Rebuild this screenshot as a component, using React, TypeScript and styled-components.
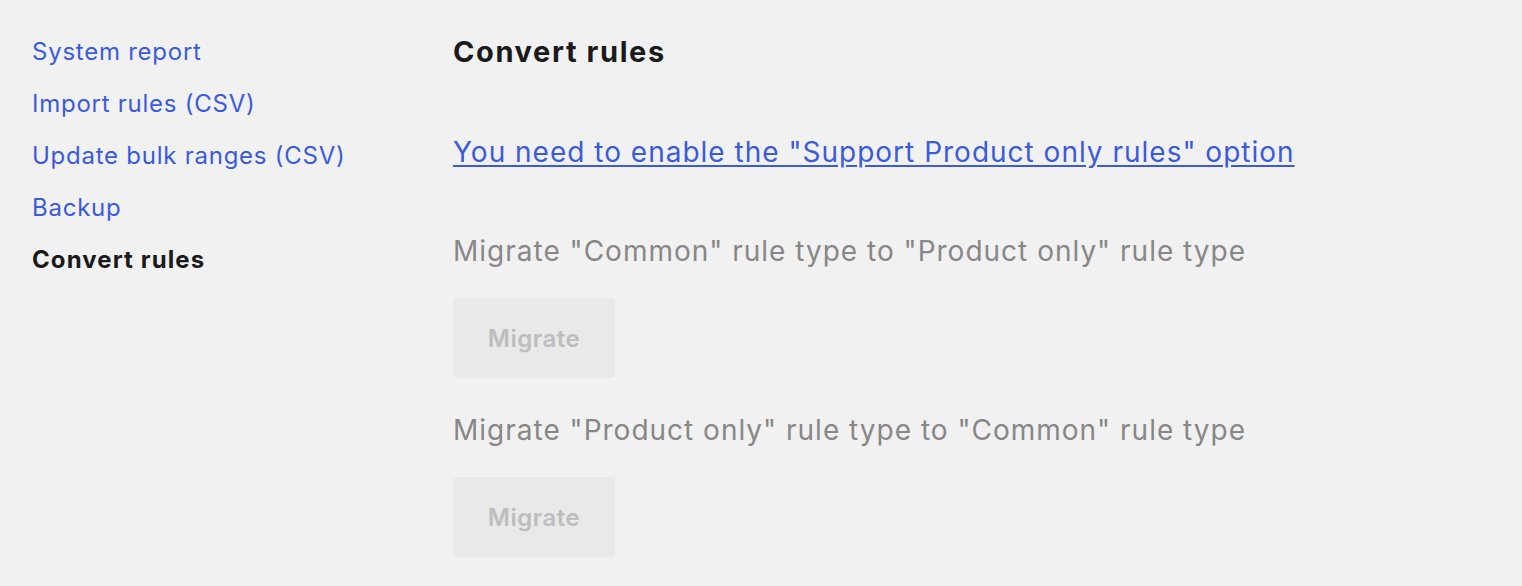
import React from 'react'
import styled, { createGlobalStyle } from 'styled-components'

const GlobalStyle = createGlobalStyle`
  html, body {
    margin: 0;
    padding: 0;
    background: #f1f1f1;
    font-family: Inter, "Noto Sans", sans-serif;
  }
`

const Page = styled.div`
  display: flex;
  padding: 32px 0 0 32px;
`

const Sidebar = styled.ul`
  list-style: none;
  margin: 5px 0 0;
  padding: 0;
  width: 421px;
  flex-shrink: 0;
  display: flex;
  flex-direction: column;
  gap: 23px;
`

const NavItem = styled.li<{ $active?: boolean }>`
  font-size: 24px;
  line-height: 29px;
  letter-spacing: ${(p) => (p.$active ? '1.1px' : '0.75px')};
  color: ${(p) => (p.$active ? '#1a1a1a' : '#3b5bdb')};
  font-weight: ${(p) => (p.$active ? 700 : 400)};
  cursor: pointer;
`

const Content = styled.main`
  display: flex;
  flex-direction: column;
  align-items: flex-start;
  padding-top: 1px;
`

const Title = styled.h1`
  margin: 0;
  font-size: 29px;
  line-height: 38px;
  letter-spacing: 1.6px;
  font-weight: 700;
  color: #1a1a1a;
`

const Notice = styled.a`
  margin-top: 64px;
  font-size: 28px;
  line-height: 34px;
  letter-spacing: 1px;
  color: #3b5bdb;
  text-decoration: underline;
  text-underline-offset: 3px;
  cursor: pointer;
`

const Section = styled.section`
  display: flex;
  flex-direction: column;
  align-items: flex-start;
  gap: 30px;
  margin-top: 65px;

  & + & {
    margin-top: 35px;
  }
`

const Description = styled.p`
  margin: 0;
  font-size: 28px;
  line-height: 34px;
  letter-spacing: 1px;
  color: #878787;
`

const MigrateButton = styled.button`
  width: 162px;
  height: 80px;
  border: none;
  border-radius: 4px;
  background: #e9e9e9;
  color: #bdbdbd;
  font-family: inherit;
  font-size: 24px;
  font-weight: 600;
  letter-spacing: 0.5px;
  cursor: not-allowed;
`

const navItems = [
  'System report',
  'Import rules (CSV)',
  'Update bulk ranges (CSV)',
  'Backup',
  'Convert rules',
]

const migrations = [
  'Migrate "Common" rule type to "Product only" rule type',
  'Migrate "Product only" rule type to "Common" rule type',
]

export default function App() {
  const current = 'Convert rules'
  return (
    <>
      <GlobalStyle />
      <Page>
        <Sidebar>
          {navItems.map((item) => (
            <NavItem key={item} $active={item === current}>
              {item}
            </NavItem>
          ))}
        </Sidebar>
        <Content>
          <Title>Convert rules</Title>
          <Notice>You need to enable the "Support Product only rules" option</Notice>
          {migrations.map((text) => (
            <Section key={text}>
              <Description>{text}</Description>
              <MigrateButton disabled>Migrate</MigrateButton>
            </Section>
          ))}
        </Content>
      </Page>
    </>
  )
}
